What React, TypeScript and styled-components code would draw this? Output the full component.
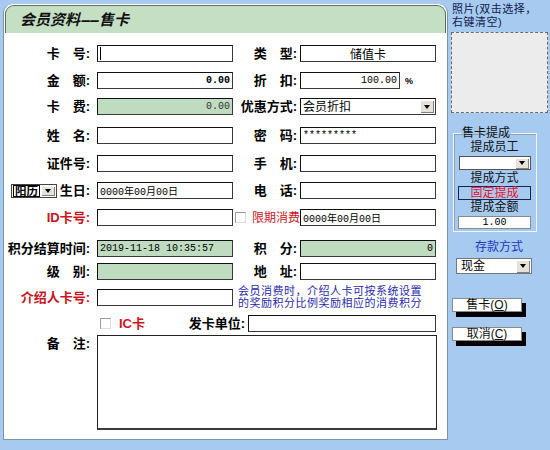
import styled, { createGlobalStyle } from 'styled-components';

const cjk = '"Liberation Sans", "Noto Sans CJK SC", sans-serif';
const mono = '"Liberation Mono", "Noto Sans CJK SC", monospace';

const GlobalStyle = createGlobalStyle`
  html, body {
    margin: 0;
    padding: 0;
    background: #a6caf0;
  }
  body {
    font-family: ${cjk};
  }
`;

function App() {
  return (
    <Screen>
      <GlobalStyle />
      <FormPanel>
        <Title>
          会员资料<Dash>--</Dash>售卡
        </Title>

        <Row $gap={12}>
          <Label>卡　号:</Label>
          <Field>
            <Caret />
          </Field>
          <Label $pr={3}>类　型:</Label>
          <Field $align="center">储值卡</Field>
        </Row>

        <Row $gap={10}>
          <Label>金　额:</Label>
          <Field $align="right" $mono $bold>
            0.00
          </Field>
          <Label $pr={3}>折　扣:</Label>
          <DiscountCell>
            <Field $align="right" $mono>
              100.00
            </Field>
            <Percent>%</Percent>
          </DiscountCell>
        </Row>

        <Row $gap={9}>
          <Label>卡　费:</Label>
          <Field $green $align="right" $mono $muted>
            0.00
          </Field>
          <Label $pr={3}>优惠方式:</Label>
          <Field $select>
            <SelectText>会员折扣</SelectText>
            <DropButton />
          </Field>
        </Row>

        <Row $gap={12}>
          <Label>姓　名:</Label>
          <Field />
          <Label $pr={3}>密　码:</Label>
          <Field $mono>*********</Field>
        </Row>

        <Row $gap={11}>
          <Label>证件号:</Label>
          <Field />
          <Label $pr={3}>手　机:</Label>
          <Field />
        </Row>

        <Row $gap={10}>
          <BirthCell>
            <CalendarSelect>
              <CalendarText>阳历</CalendarText>
              <DropButton />
            </CalendarSelect>
            <Label>生日:</Label>
          </BirthCell>
          <Field $mono>0000年00月00日</Field>
          <Label $pr={3}>电　话:</Label>
          <Field />
        </Row>

        <Row $gap={10}>
          <Label $red>ID卡号:</Label>
          <Field />
          <CheckCell>
            <CheckBox />
            <RedText>限期消费</RedText>
          </CheckCell>
          <Field $mono>0000年00月00日</Field>
        </Row>

        <Row $gap={14}>
          <Label>积分结算时间:</Label>
          <Field $green $mono>
            2019-11-18 10:35:57
          </Field>
          <Label $pr={3}>积　分:</Label>
          <Field $green $align="right" $mono>
            0
          </Field>
        </Row>

        <Row $gap={6}>
          <Label>级　别:</Label>
          <Field $green />
          <Label $pr={3}>地　址:</Label>
          <Field />
        </Row>

        <Row $gap={9}>
          <Label $red>介绍人卡号:</Label>
          <Field />
          <Hint>
            会员消费时，介绍人卡可按系统设置
            <br />
            的奖励积分比例奖励相应的消费积分
          </Hint>
        </Row>

        <Row $gap={9} $cols="93px 91px 60px 188px">
          <span />
          <CheckCell $pl={3}>
            <CheckBox />
            <RedText $bold>IC卡</RedText>
          </CheckCell>
          <Label $pr={3}>发卡单位:</Label>
          <Field />
        </Row>

        <Row $gap={3} $h={95} $top>
          <Label $top>备　注:</Label>
          <NoteArea />
        </Row>
      </FormPanel>

      <SidePanel>
        <PhotoCaption>
          照片(双击选择，
          <br />
          右键清空)
        </PhotoCaption>
        <PhotoBox />

        <GroupBox>
          <Legend>售卡提成</Legend>
          <GroupText>提成员工</GroupText>
          <SmallSelect>
            <DropButton />
          </SmallSelect>
          <GroupText>提成方式</GroupText>
          <ModeBox>固定提成</ModeBox>
          <GroupText>提成金额</GroupText>
          <AmountBox>1.00</AmountBox>
        </GroupBox>

        <PayTitle>存款方式</PayTitle>
        <PaySelect>
          <SelectText>现金</SelectText>
          <DropButton />
        </PaySelect>

        <ActionButton $mt={24}>
          售卡(<u>O</u>)
        </ActionButton>
        <ActionButton $mt={15}>
          取消(<u>C</u>)
        </ActionButton>
      </SidePanel>
    </Screen>
  );
}

export default App;

const Screen = styled.div`
  width: 550px;
  height: 450px;
  display: flex;
  align-items: flex-start;
  background: #a6caf0;
  overflow: hidden;
`;

const FormPanel = styled.div`
  box-sizing: border-box;
  width: 445px;
  height: 436px;
  margin: 4px 0 0 3px;
  background: #ffffff;
  border: 1px solid #7f93a8;
  border-top: none;
  border-radius: 9px 9px 0 0;
  display: flex;
  flex-direction: column;
`;

const Title = styled.div`
  box-sizing: border-box;
  height: 28px;
  margin: 1px 1px 0 1px;
  padding-left: 14px;
  background: #c4dfc4;
  border: 1px solid #5f6f5f;
  border-bottom: none;
  border-radius: 9px 9px 0 0;
  font-size: 15px;
  font-weight: bold;
  font-style: italic;
  line-height: 28px;
  color: #111;
`;

const Dash = styled.span`
  display: inline-block;
  margin: 0 6px 0 5px;
  transform: scaleX(2.2);
  letter-spacing: -1px;
`;

const Row = styled.div<{ $gap: number; $cols?: string; $h?: number; $top?: boolean }>`
  display: grid;
  grid-template-columns: ${(p) => p.$cols ?? '93px 136px 67px 136px'};
  grid-template-rows: ${(p) => p.$h ?? 17}px;
  align-items: ${(p) => (p.$top ? 'start' : 'center')};
  height: ${(p) => p.$h ?? 17}px;
  margin-top: ${(p) => p.$gap}px;
  flex: none;
`;

const Label = styled.span<{ $pr?: number; $red?: boolean; $top?: boolean }>`
  justify-self: end;
  padding-right: ${(p) => p.$pr ?? 7}px;
  padding-top: ${(p) => (p.$top ? 1 : 0)}px;
  font-size: 13px;
  font-weight: bold;
  line-height: 15px;
  white-space: nowrap;
  color: ${(p) => (p.$red ? '#c8141e' : '#000')};
`;

const Field = styled.div<{
  $green?: boolean;
  $align?: 'left' | 'right' | 'center';
  $mono?: boolean;
  $bold?: boolean;
  $muted?: boolean;
  $select?: boolean;
}>`
  box-sizing: border-box;
  height: 17px;
  display: flex;
  align-items: center;
  justify-content: ${(p) =>
    p.$align === 'right' ? 'flex-end' : p.$align === 'center' ? 'center' : 'flex-start'};
  padding: ${(p) => (p.$select ? '0 1px 0 2px' : '0 2px')};
  background: ${(p) => (p.$green ? '#c0dcc0' : '#ffffff')};
  border: 1px solid #3a3a3a;
  border-top-color: #111;
  border-left-color: #111;
  font-family: ${(p) => (p.$mono ? mono : cjk)};
  font-size: ${(p) => (p.$mono ? 10 : 12)}px;
  font-weight: ${(p) => (p.$bold ? 'bold' : 'normal')};
  color: ${(p) => (p.$muted ? '#333' : '#000')};
  white-space: nowrap;
  overflow: hidden;
`;

const Caret = styled.span`
  width: 1px;
  height: 13px;
  background: #000;
`;

const DiscountCell = styled.div`
  display: grid;
  grid-template-columns: 100px 1fr;
  align-items: center;
`;

const Percent = styled.span`
  padding-left: 5px;
  font-size: 9px;
  font-weight: bold;
`;

const SelectText = styled.span`
  flex: 1;
  font-size: 12px;
  line-height: 14px;
  color: #000;
`;

const DropButton = styled.span`
  width: 14px;
  height: 13px;
  flex: none;
  margin-left: auto;
  background: #e6e3dc;
  box-shadow: inset 1px 1px 0 #ffffff, inset -1px -1px 0 #808080;
  display: flex;
  align-items: center;
  justify-content: center;

  &::after {
    content: '';
    border-left: 3.5px solid transparent;
    border-right: 3.5px solid transparent;
    border-top: 4px solid #000;
  }
`;

const BirthCell = styled.div`
  display: flex;
  align-items: center;
  justify-content: space-between;
  padding-left: 7px;
`;

const CalendarSelect = styled.div`
  box-sizing: border-box;
  width: 46px;
  height: 14px;
  display: flex;
  align-items: center;
  gap: 1px;
  padding: 0 1px;
  background: #fff;
  border: 1px solid #444;

  ${DropButton} {
    height: 10px;
    width: 14px;
  }
`;

const CalendarText = styled.span`
  box-sizing: border-box;
  height: 12px;
  padding: 0 1px;
  border: 1px solid #000;
  font-size: 11.5px;
  font-weight: bold;
  line-height: 10px;
  white-space: nowrap;
`;

const CheckCell = styled.div<{ $pl?: number }>`
  display: flex;
  align-items: center;
  gap: 6px;
  padding-left: ${(p) => p.$pl ?? 2}px;
`;

const CheckBox = styled.span`
  box-sizing: border-box;
  width: 11px;
  height: 11px;
  flex: none;
  background: #fff;
  border: 1px solid #9a9a9a;
  border-right-color: #dcdcdc;
  border-bottom-color: #dcdcdc;
`;

const RedText = styled.span<{ $bold?: boolean }>`
  font-size: ${(p) => (p.$bold ? 13 : 12)}px;
  font-weight: ${(p) => (p.$bold ? 'bold' : 'normal')};
  line-height: 14px;
  color: #d0141e;
  white-space: nowrap;
  margin-left: ${(p) => (p.$bold ? 2 : 0)}px;
`;

const Hint = styled.div`
  grid-column: 3 / span 2;
  padding-left: 5px;
  font-size: 11px;
  line-height: 11.5px;
  letter-spacing: 0.5px;
  color: #2a2ab0;
  white-space: nowrap;
`;

const NoteArea = styled.div`
  grid-column: 2 / span 3;
  box-sizing: border-box;
  height: 95px;
  width: 340px;
  background: #fff;
  border: 1px solid #222;
  border-bottom: 2px solid #3c3c3c;
`;

const SidePanel = styled.div`
  width: 102px;
  display: flex;
  flex-direction: column;
  align-items: flex-start;
  padding-top: 3px;
`;

const PhotoCaption = styled.div`
  margin-left: 4px;
  font-size: 11px;
  line-height: 13px;
  letter-spacing: 0.5px;
  color: #14204e;
  white-space: nowrap;
`;

const PhotoBox = styled.div`
  box-sizing: border-box;
  width: 97px;
  height: 81px;
  margin: 3px 0 0 3px;
  background: #ececec;
  border: 1px dashed #6b6b6b;
`;

const GroupBox = styled.fieldset`
  box-sizing: border-box;
  width: 84px;
  margin: 14px 0 0 5px;
  padding: 0 5px 2px 4px;
  border: 1px solid #f2f5f8;
  box-shadow: inset 1px 1px 0 #8da2b8;
  display: flex;
  flex-direction: column;
  align-items: center;
  min-width: 0;
`;

const Legend = styled.legend`
  padding: 0 1px;
  margin-left: 3px;
  font-size: 12px;
  line-height: 13px;
  color: #111;
`;

const GroupText = styled.div`
  font-size: 12px;
  line-height: 13px;
  margin-top: 1px;
  color: #111;
`;

const SmallSelect = styled.div`
  box-sizing: border-box;
  width: 72px;
  height: 14px;
  margin: 2px 0 1px;
  display: flex;
  align-items: center;
  padding-right: 1px;
  background: #fff;
  border: 1px solid #555;

  ${DropButton} {
    height: 11px;
  }
`;

const ModeBox = styled.div`
  box-sizing: border-box;
  width: 73px;
  height: 14px;
  margin-top: 1px;
  border: 1px solid #16244e;
  background: #a6caf0;
  font-size: 12px;
  line-height: 12px;
  text-align: center;
  color: #e8102a;
`;

const AmountBox = styled.div`
  box-sizing: border-box;
  width: 73px;
  height: 13px;
  margin-top: 2px;
  background: #fff;
  border: 1px solid #8a8a8a;
  font-family: ${mono};
  font-size: 10px;
  line-height: 11px;
  text-align: center;
  color: #000;
`;

const PayTitle = styled.div`
  align-self: center;
  margin-top: 9px;
  font-size: 12px;
  line-height: 13px;
  color: #2036c0;
`;

const PaySelect = styled.div`
  box-sizing: border-box;
  width: 76px;
  height: 16px;
  margin: 4px 0 0 8px;
  display: flex;
  align-items: center;
  padding: 0 1px 0 4px;
  background: #fff;
  border: 1px solid #777;
`;

const ActionButton = styled.div<{ $mt: number }>`
  box-sizing: border-box;
  width: 70px;
  height: 14px;
  margin: ${(p) => p.$mt}px 0 0 4px;
  background: #fff;
  border: 1px solid #8a8a8a;
  box-shadow: 4px 5px 0 #000;
  font-size: 12px;
  line-height: 12px;
  text-align: center;
  color: #111;

  u {
    text-underline-offset: 1px;
  }
`;
